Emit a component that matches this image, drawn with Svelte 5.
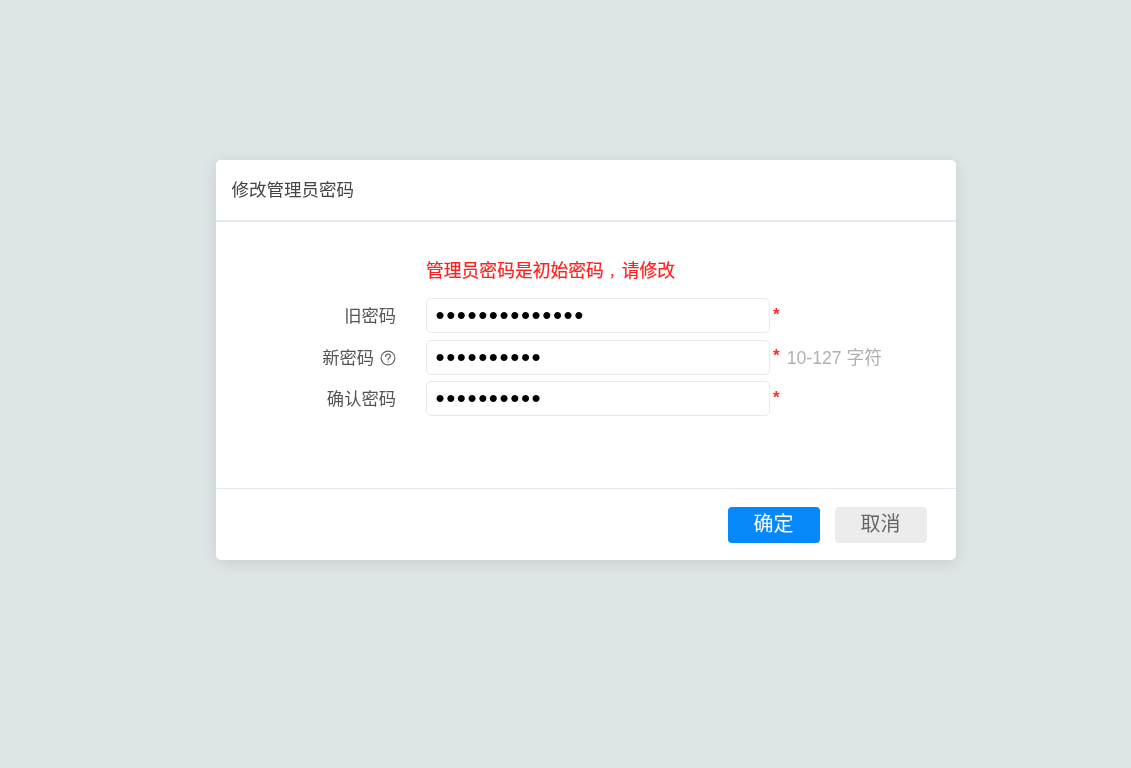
<script>
  const fields = [
    { label: '旧密码', len: 14 },
    { label: '新密码', len: 10, help: true, hint: '10-127 字符' },
    { label: '确认密码', len: 10 }
  ];
</script>

<div class="page">
  <div class="dialog">
    <div class="header">修改管理员密码</div>
    <div class="body">
      <div class="warning">管理员密码是初始密码<span class="comma">，</span>请修改</div>
      {#each fields as field}
        <div class="row">
          <label class="label">
            {field.label}
            {#if field.help}
              <svg class="help" width="16" height="16" viewBox="0 0 17 17" fill="none" stroke="#666" stroke-width="1.3">
                <circle cx="8.5" cy="8.5" r="7.3" />
                <path d="M6 6.8c0-1.5 1.1-2.4 2.6-2.4s2.5.9 2.5 2.1c0 1.7-2.4 1.9-2.5 4" stroke-linecap="round" />
                <circle cx="8.6" cy="12.8" r=".7" fill="#666" stroke="none" />
              </svg>
            {/if}
          </label>
          <input class="input" type="password" value={'x'.repeat(field.len)} />
          <span class="req">*</span>
          {#if field.hint}<span class="hint">{field.hint}</span>{/if}
        </div>
      {/each}
    </div>
    <div class="footer">
      <button class="btn primary">确定</button>
      <button class="btn">取消</button>
    </div>
  </div>
</div>

<style>
  :global(body) {
    background: #dee5e7;
  }

  .page {
    padding: 160px 0 0 215.5px;
    height: 608px;
    font-family: "Liberation Sans", "Noto Sans CJK SC", sans-serif;
  }

  .dialog {
    width: 740.5px;
    height: 400px;
    display: flex;
    flex-direction: column;
    background: #fff;
    border-radius: 5px;
    box-shadow: 0 3px 16px rgba(0, 0, 0, 0.1);
    filter: blur(0.4px);
  }

  .header {
    padding: 0 0 4px 16px;
    height: 56px;
    display: flex;
    align-items: center;
    font-size: 17.5px;
    color: #444;
    border-bottom: 2.5px solid #e4ebee;
  }

  .body {
    flex: 1;
    padding-top: 36px;
  }

  .warning {
    margin-left: 210.5px;
    margin-bottom: 13px;
    height: 27px;
    line-height: 27px;
    font-size: 17.8px;
    color: #ff2020;
    -webkit-text-stroke: 0.2px #ff2020;
  }

  .comma {
    display: inline-block;
    padding-left: 0.43em;
    font-size: 0.7em;
  }

  .row {
    display: flex;
    align-items: center;
    height: 35px;
    margin-bottom: 6.5px;
  }

  .label {
    width: 180.5px;
    margin-right: 30px;
    padding-bottom: 2px;
    display: flex;
    justify-content: flex-end;
    align-items: center;
    gap: 6px;
    font-size: 17.3px;
    color: #555;
  }

  .help {
    margin-top: 4px;
  }

  .input {
    box-sizing: border-box;
    width: 344px;
    height: 35px;
    padding: 0 8.5px;
    border: 1.5px solid #e2ebf2;
    border-radius: 5px;
    outline: none;
    font-family: inherit;
    font-size: 26px;
    letter-spacing: 1.57px;
    color: #000;
  }

  .req {
    margin-left: 3px;
    margin-bottom: 2px;
    font-size: 17px;
    font-weight: 700;
    color: #ff2a2a;
  }

  .hint {
    margin-left: 7px;
    padding-bottom: 3px;
    font-size: 17.7px;
    color: #b0b0b0;
  }

  .footer {
    height: 72px;
    padding: 0 29.5px 0 0;
    box-sizing: border-box;
    display: flex;
    justify-content: flex-end;
    align-items: center;
    gap: 15px;
    border-top: 1px solid #e4ebee;
  }

  .btn {
    width: 92px;
    height: 36px;
    padding: 0 0 4px;
    border: none;
    border-radius: 4px;
    background: #ececec;
    font-family: inherit;
    font-size: 20px;
    color: #666;
  }

  .btn.primary {
    background: #0688fa;
    color: #fff;
  }
</style>
